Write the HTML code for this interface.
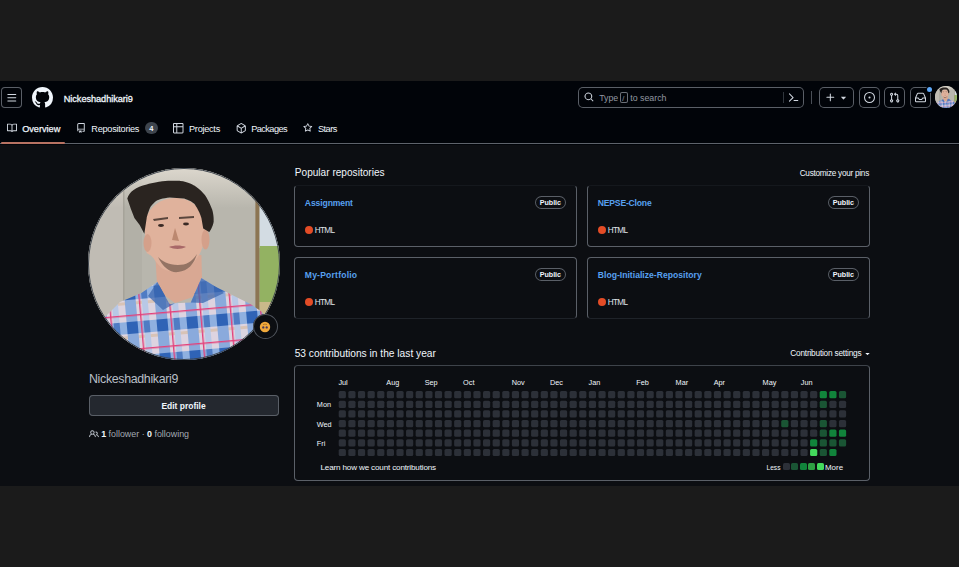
<!DOCTYPE html><html><head><meta charset="utf-8"><style>
html,body{margin:0;padding:0;}
body{width:959px;height:567px;background:#1b1b1b;position:relative;overflow:hidden;font-family:"Liberation Sans",sans-serif;}
.t{position:absolute;white-space:nowrap;line-height:1;}
.r{position:absolute;box-sizing:border-box;}
svg{position:absolute;overflow:visible;}
</style></head><body>
<div class="r" style="left:0px;top:81px;width:959px;height:64px;background:#010409;"></div>
<div class="r" style="left:0px;top:145px;width:959px;height:341px;background:#0c0e12;"></div>
<div class="r" style="left:0px;top:143px;width:959px;height:1px;background:#5e636b;"></div>
<div class="r" style="left:1px;top:142px;width:64px;height:2px;background:#b87262;border-radius:1px;"></div>
<div class="r" style="left:1px;top:87px;width:21px;height:21px;background:transparent;box-shadow:inset 0 0 0 1px #5a5f67;border-radius:4px;"></div>
<svg style="left:4px;top:90px" width="16" height="16" viewBox="0 0 16 16"><path fill="#d1d7e0" d="M1 2.75A.75.75 0 0 1 1.75 2h12.5a.75.75 0 0 1 0 1.5H1.75A.75.75 0 0 1 1 2.75Zm0 5A.75.75 0 0 1 1.75 7h12.5a.75.75 0 0 1 0 1.5H1.75A.75.75 0 0 1 1 7.75ZM1.75 12h12.5a.75.75 0 0 1 0 1.5H1.75a.75.75 0 0 1 0-1.5Z" transform="translate(2.6 2.6) scale(0.65)"/></svg>
<svg style="left:32px;top:87px" width="21" height="21" viewBox="0 0 16 16"><path fill="#f0f6fc" d="M8 0c4.42 0 8 3.58 8 8a8.013 8.013 0 0 1-5.45 7.59c-.4.08-.55-.17-.55-.38 0-.27.01-1.13.01-2.2 0-.75-.25-1.23-.54-1.48 1.78-.2 3.65-.88 3.650-3.95 0-.88-.31-1.59-.82-2.15.08-.2.36-1.02-.08-2.12 0 0-.67-.22-2.2.82-.64-.18-1.320-.27-2-.27-.68 0-1.36.09-2 .27-1.53-1.030-2.2-.82-2.2-.82-.44 1.1-.16 1.92-.08 2.12-.51.56-.82 1.28-.82 2.15 0 3.06 1.86 3.75 3.64 3.95-.23.2-.44.55-.51 1.07-.46.21-1.61.55-2.33-.66-.15-.24-.6-.83-1.23-.82-.67.01-.27.38.01.53.34.19.73.9.82 1.13.16.45.68 1.31 2.69.94 0 .67.01 1.3.01 1.49 0 .21-.15.45-.55.38A7.995 7.995 0 0 1 0 8c0-4.42 3.58-8 8-8Z"/></svg>
<div class="t" style="left:63.75px;top:95px;font-size:9.20px;color:#f0f6fc;letter-spacing:-0.057px;-webkit-text-stroke:0.3px #f0f6fc;">Nickeshadhikari9</div>
<div class="r" style="left:578px;top:87px;width:226px;height:21px;background:transparent;box-shadow:inset 0 0 0 1px #5a5f67;border-radius:5px;"></div>
<svg style="left:584px;top:92px" width="10" height="10" viewBox="0 0 16 16"><path fill="#d1d7e0" d="M10.68 11.74a6 6 0 0 1-7.922-8.982 6 6 0 0 1 8.982 7.922l3.04 3.04a.749.749 0 0 1-.326 1.275.749.749 0 0 1-.734-.215ZM11.5 7a4.499 4.499 0 1 0-8.997 0A4.499 4.499 0 0 0 11.5 7Z"/></svg>
<div class="t" style="left:599.20px;top:94px;font-size:8.80px;color:#9198a1;">Type</div>
<div class="r" style="left:620px;top:92px;width:8px;height:11px;background:transparent;box-shadow:inset 0 0 0 1px #6b7078;border-radius:2px;"></div>
<div class="t" style="left:622.30px;top:95px;font-size:7.50px;color:#9198a1;">/</div>
<div class="t" style="left:630.20px;top:94px;font-size:8.83px;color:#9198a1;">to search</div>
<div class="r" style="left:783px;top:92px;width:1px;height:11px;background:#30363d;"></div>
<svg style="left:788px;top:92px" width="11" height="11" viewBox="0 0 16 16"><path fill="#d1d7e0" d="m6.354 8.04-4.773 4.773a.75.75 0 1 0 1.061 1.06L7.945 8.57a.75.75 0 0 0 0-1.06L2.642 2.206a.75.75 0 0 0-1.06 1.061L6.353 8.04ZM8.75 11.5a.75.75 0 0 0 0 1.5h5.5a.75.75 0 0 0 0-1.5h-5.5Z"/></svg>
<div class="r" style="left:811px;top:91px;width:1px;height:13px;background:#4a4f57;"></div>
<div class="r" style="left:819px;top:87px;width:35px;height:21px;background:transparent;box-shadow:inset 0 0 0 1px #5a5f67;border-radius:5px;"></div>
<svg style="left:824.5px;top:92px" width="11" height="11" viewBox="0 0 16 16"><path fill="#d1d7e0" d="M7.75 2a.75.75 0 0 1 .75.75V7h4.25a.75.75 0 0 1 0 1.5H8.5v4.25a.75.75 0 0 1-1.5 0V8.5H2.75a.75.75 0 0 1 0-1.5H7V2.75A.75.75 0 0 1 7.75 2Z"/></svg>
<svg style="left:838px;top:92px" width="11" height="11" viewBox="0 0 16 16"><path fill="#d1d7e0" d="m4.427 7.427 3.396 3.396a.25.25 0 0 0 .354 0l3.396-3.396A.25.25 0 0 0 11.396 7H4.604a.25.25 0 0 0-.177.427Z"/></svg>
<div class="r" style="left:859px;top:87px;width:21px;height:21px;background:transparent;box-shadow:inset 0 0 0 1px #5a5f67;border-radius:5px;"></div>
<svg style="left:864px;top:92px" width="11" height="11" viewBox="0 0 16 16"><path fill="#d1d7e0" d="M8 9.5a1.5 1.5 0 1 0 0-3 1.5 1.5 0 0 0 0 3Z"/><path fill="#d1d7e0" d="M8 0a8 8 0 1 1 0 16A8 8 0 0 1 8 0ZM1.5 8a6.5 6.5 0 1 0 13 0 6.5 6.5 0 0 0-13 0Z"/></svg>
<div class="r" style="left:884px;top:87px;width:21px;height:21px;background:transparent;box-shadow:inset 0 0 0 1px #5a5f67;border-radius:5px;"></div>
<svg style="left:889px;top:92px" width="11" height="11" viewBox="0 0 16 16"><path fill="#d1d7e0" d="M1.5 3.25a2.25 2.25 0 1 1 3 2.122v5.256a2.251 2.251 0 1 1-1.5 0V5.372A2.25 2.25 0 0 1 1.5 3.25Zm5.677-.177L9.573.677A.25.25 0 0 1 10 .854V2.5h1A2.5 2.5 0 0 1 13.5 5v5.628a2.251 2.251 0 1 1-1.5 0V5a1 1 0 0 0-1-1h-1v1.646a.25.25 0 0 1-.427.177L7.177 3.427a.25.25 0 0 1 0-.354ZM3.750 2.5a.75.75 0 1 0 0 1.5.75.75 0 0 0 0-1.5Zm0 9.5a.75.75 0 1 0 0 1.5.75.75 0 0 0 0-1.5Zm8.25.75a.75.75 0 1 0 1.5 0 .75.75 0 0 0-1.5 0Z"/></svg>
<div class="r" style="left:910px;top:87px;width:21px;height:21px;background:transparent;box-shadow:inset 0 0 0 1px #5a5f67;border-radius:5px;"></div>
<svg style="left:915px;top:92px" width="11" height="11" viewBox="0 0 16 16"><path fill="#d1d7e0" d="M2.8 2.06A1.75 1.75 0 0 1 4.41 1h7.18c.7 0 1.333.417 1.61 1.06l2.74 6.395c.04.093.06.194.06.295v4.5A1.75 1.75 0 0 1 14.25 15H1.75A1.75 1.75 0 0 1 0 13.250v-4.5c0-.101.02-.202.06-.295Zm1.61.44a.25.25 0 0 0-.23.152L1.887 8H4.75a.75.75 0 0 1 .6.3L6.625 10h2.75l1.275-1.7a.75.75 0 0 1 .6-.3h2.863L11.82 2.652a.25.25 0 0 0-.23-.152Zm10.09 7h-2.875l-1.275 1.7a.75.75 0 0 1-.6.3h-3.5a.75.75 0 0 1-.6-.3L4.375 9.5H1.5v3.75c0 .138.112.25.25.25h12.5a.25.25 0 0 0 .25-.25Z"/></svg>
<div class="r" style="left:926.5px;top:86.5px;width:5.5px;height:5.5px;background:#5ea8f8;border-radius:3px;box-shadow:0 0 0 1px #010409"></div>
<svg style="left:935px;top:86px" width="22" height="22" viewBox="88 168 192 192"><g clip-path="url(#avc)">
<rect x="88" y="168" width="192" height="192" fill="#b8b6ad"/>
<rect x="88" y="168" width="36" height="192" fill="#c0bcb4"/><rect x="124" y="168" width="18" height="192" fill="#b2b0a7"/><rect x="88" y="168" width="192" height="40" fill="url(#topg)"/>
<rect x="123.3" y="168" width="1" height="192" fill="#9c998f"/>
<rect x="255.4" y="168" width="4.2" height="192" fill="#8c7553"/>
<rect x="259.6" y="168" width="25" height="80" fill="#d3dce3"/>
<rect x="259.6" y="246" width="25" height="60" fill="#93b262"/>
<rect x="259.6" y="302" width="25" height="60" fill="#c9b98a"/>
<path d="M155.5,258.5 L201.4,255 L202,278 L214,290 L175,303 L157.3,290 Z" fill="#d9a893"/>
<path d="M144.3,226 C146,210 158,198 175,198 C192,198 203,208 204.9,228.5 L203.2,244.4 C201.5,252 197,259 192.6,263.8 C187,269 183,270.8 176,271.5 C168,271.5 164,270 160.8,267.3 C157,263 155,261 153.8,258.5 C150,254 146.7,253.2 146.7,253.2 Z" fill="#e0b29c"/>
<ellipse cx="147.5" cy="243" rx="4" ry="9" fill="#d4a08a"/>
<ellipse cx="205.5" cy="239.6" rx="4" ry="10" fill="#d4a08a"/>
<path d="M158,257 C163,268 171,273 178,272 C188,271 194,264 197,254 C192,262 186,265 178,265 C168,265 162,261 158,257 Z" fill="#86685a" opacity="0.85"/>
<path d="M169,247 C174,245 181,245 186,247 C181,249.5 174,249.5 169,247 Z" fill="#a86868"/>
<ellipse cx="161" cy="225.5" rx="3" ry="1.4" fill="#3a2a25"/>
<ellipse cx="186" cy="224" rx="3" ry="1.4" fill="#3a2a25"/>
<path d="M153,219 L168,217 L168,219 L154,221 Z" fill="#5a463d"/>
<path d="M179,217 L194,216 L194,218 L179,219 Z" fill="#5a463d"/>
<path d="M175,228 L172,240 L179,241 Z" fill="#bb8870"/>
<path d="M127.3,198.5 C129,192 136,187 146.7,184.5 C152,182.5 162.6,181.2 162.6,181.2 C170,180.5 180.2,180.9 180.2,180.9 C188,181.5 194.3,185.5 194.3,185.5 C200,189 204.9,195 204.9,195 C209,201 212,209.1 212,209.1 C214,215 213.7,221.4 213.7,221.4 C213,227 209.2,232 209.2,232 L203.2,228.5 L201.4,217.9 C199,210 194.3,203.8 194.3,203.8 C190,200 183.8,198.5 183.8,198.5 L169.7,197.5 C163,198 157.3,200.3 157.3,200.3 C153,203 150.3,207.3 150.3,207.3 C148,212 146.7,217.9 146.7,217.9 L144.3,233.8 L139.7,225 L134.4,217.9 L130.9,209.1 Z" fill="#2a2420"/>
<path d="M100,362 L100,322 L106,316 L120,302 L141.4,293 L157.3,282 L169.7,304.3 L175,303.3 L190.8,302.6 L201.4,277.9 L215.5,286.7 L233.1,295.5 L250.8,304.3 L261.4,311.4 L268.4,320.2 L282,336 L282,362 Z" fill="url(#plaid)"/>
<path d="M157.3,282 L169.7,304.3 L175,303.3 L163,310 L148,296 Z" fill="#3d68b0" opacity="0.75"/>
<path d="M201.4,277.9 L215.5,286.7 L224,293 L203,303 L190.8,302.6 Z" fill="#3d68b0" opacity="0.75"/>
</g></svg>
<div class="t" style="left:22.20px;top:125px;font-size:9.20px;color:#f0f6fc;letter-spacing:-0.03px;-webkit-text-stroke:0.25px #f0f6fc;">Overview</div>
<div class="t" style="left:91.30px;top:125px;font-size:9.20px;color:#f0f6fc;letter-spacing:-0.27px;">Repositories</div>
<div class="r" style="left:145px;top:122px;width:13px;height:12px;background:#3d444d;border-radius:6px;"></div>
<div class="t" style="left:149.20px;top:125px;font-size:7.50px;font-weight:700;color:#f0f6fc;">4</div>
<div class="t" style="left:189.00px;top:125px;font-size:9.20px;color:#f0f6fc;letter-spacing:-0.279px;">Projects</div>
<div class="t" style="left:251.30px;top:125px;font-size:9.20px;color:#f0f6fc;letter-spacing:-0.588px;">Packages</div>
<div class="t" style="left:318.00px;top:125px;font-size:9.20px;color:#f0f6fc;letter-spacing:-0.555px;">Stars</div>
<svg style="left:7px;top:123px" width="10" height="10" viewBox="0 0 16 16"><path fill="#d1d7e0" d="M0 1.75A.75.75 0 0 1 .75 1h4.253c1.227 0 2.317.59 3 1.501A3.743 3.743 0 0 1 11.006 1h4.245a.75.75 0 0 1 .75.75v10.5a.75.75 0 0 1-.75.75h-4.507a2.25 2.25 0 0 0-1.591.659l-.622.621a.75.75 0 0 1-1.06 0l-.622-.621A2.25 2.25 0 0 0 5.258 13H.75a.75.75 0 0 1-.75-.75Zm7.251 10.324.004-5.073-.002-2.253A2.25 2.25 0 0 0 5.003 2.5H1.5v9h3.757a3.75 3.75 0 0 1 1.994.574ZM8.755 4.75l-.004 7.322a3.752 3.752 0 0 1 1.992-.572H14.5v-9h-3.495a2.25 2.25 0 0 0-2.25 2.25Z"/></svg>
<svg style="left:76px;top:123px" width="10" height="10" viewBox="0 0 16 16"><path fill="#d1d7e0" d="M2 2.5A2.5 2.5 0 0 1 4.5 0h8.75a.75.75 0 0 1 .75.75v12.5a.75.75 0 0 1-.75.75h-2.5a.75.75 0 0 1 0-1.5h1.75v-2h-8a1 1 0 0 0-.714 1.7.75.75 0 1 1-1.072 1.05A2.495 2.495 0 0 1 2 11.5Zm10.5-1h-8a1 1 0 0 0-1 1v6.708A2.486 2.486 0 0 1 4.5 9h8ZM5 12.25a.25.25 0 0 1 .25-.25h3.5a.25.25 0 0 1 .25.25v3.25a.25.25 0 0 1-.4.2l-1.45-1.087a.249.249 0 0 0-.3 0L5.4 15.7a.25.25 0 0 1-.4-.2Z"/></svg>
<svg style="left:173px;top:123px" width="10.5" height="10.5" viewBox="0 0 16 16"><path fill="#d1d7e0" d="M0 1.75C0 .784.784 0 1.75 0h12.5C15.216 0 16 .784 16 1.75v12.5A1.75 1.75 0 0 1 14.25 16H1.75A1.75 1.75 0 0 1 0 14.25ZM6.5 6.5v8h7.75a.25.25 0 0 0 .25-.25V6.5Zm8-1.5V1.75a.25.25 0 0 0-.25-.25H6.5V5Zm-13 1.5v7.750c0 .138.112.25.25.25H5v-8ZM5 5V1.5H1.75a.25.25 0 0 0-.25.25V5Z"/></svg>
<svg style="left:235.5px;top:123px" width="10.5" height="10.5" viewBox="0 0 16 16"><path fill="#d1d7e0" d="m8.878.392 5.25 3.045c.54.314.872.89.872 1.514v6.098a1.75 1.75 0 0 1-.872 1.514l-5.25 3.045a1.75 1.75 0 0 1-1.756 0l-5.25-3.045A1.75 1.75 0 0 1 1 11.049V4.951c0-.624.332-1.2.872-1.514L7.122.392a1.75 1.75 0 0 1 1.756 0ZM7.875 1.69l-4.63 2.685L8 7.133l4.755-2.758-4.63-2.685a.248.248 0 0 0-.25 0ZM2.5 5.677v5.372c0 .09.047.171.125.216l4.625 2.683V8.432Zm6.25 8.271 4.625-2.683a.25.25 0 0 0 .125-.216V5.677L8.75 8.432Z"/></svg>
<svg style="left:302.8px;top:123px" width="9.6" height="9.6" viewBox="0 0 16 16"><path fill="#d1d7e0" d="M8 .25a.75.75 0 0 1 .673.418l1.882 3.815 4.21.612a.75.75 0 0 1 .416 1.279l-3.046 2.97.719 4.192a.751.751 0 0 1-1.088.791L8 12.347l-3.766 1.98a.75.75 0 0 1-1.088-.79l.72-4.194L.818 6.374a.75.75 0 0 1 .416-1.28l4.21-.611L7.327.668A.75.75 0 0 1 8 .25Zm0 2.445L6.615 5.5a.75.75 0 0 1-.564.41l-3.097.45 2.24 2.184a.75.75 0 0 1 .216.664l-.528 3.084 2.769-1.456a.75.75 0 0 1 .698 0l2.77 1.456-.53-3.084a.75.75 0 0 1 .216-.664l2.24-2.183-3.096-.45a.75.75 0 0 1-.564-.41L8 2.694Z"/></svg>
<svg style="left:0;top:0" width="0" height="0"><defs>
<linearGradient id="topg" x1="0" y1="0" x2="0" y2="1"><stop offset="0" stop-color="#dcd7cd"/><stop offset="1" stop-color="#dcd7cd" stop-opacity="0"/></linearGradient><clipPath id="avc"><circle cx="184" cy="264" r="96"/></clipPath>
<pattern id="plaid" patternUnits="userSpaceOnUse" x="98" y="288" width="30" height="34" patternTransform="rotate(-5)">
<rect width="30" height="34" fill="#ddd4e0"/>
<rect x="0" y="24" width="30" height="3" fill="#d8c3b6"/>
<rect x="17" y="0" width="6" height="34" fill="#b8c8e6"/>
<rect x="0" y="10" width="30" height="12" fill="#8fb0e0"/>
<rect x="0" y="0" width="11" height="34" fill="#8aaadc"/>
<rect x="0" y="10" width="11" height="12" fill="#2f63b6"/>
<rect x="17" y="10" width="6" height="12" fill="#4f7cc4"/>
<rect x="14" y="0" width="1.4" height="34" fill="#e4407a"/>
<rect x="0" y="3" width="30" height="1.4" fill="#e4407a"/>
</pattern>
</defs></svg><svg style="left:88px;top:168px" width="192" height="192" viewBox="88 168 192 192"><g clip-path="url(#avc)">
<rect x="88" y="168" width="192" height="192" fill="#b8b6ad"/>
<rect x="88" y="168" width="36" height="192" fill="#c0bcb4"/><rect x="124" y="168" width="18" height="192" fill="#b2b0a7"/><rect x="88" y="168" width="192" height="40" fill="url(#topg)"/>
<rect x="123.3" y="168" width="1" height="192" fill="#9c998f"/>
<rect x="255.4" y="168" width="4.2" height="192" fill="#8c7553"/>
<rect x="259.6" y="168" width="25" height="80" fill="#d3dce3"/>
<rect x="259.6" y="246" width="25" height="60" fill="#93b262"/>
<rect x="259.6" y="302" width="25" height="60" fill="#c9b98a"/>
<path d="M155.5,258.5 L201.4,255 L202,278 L214,290 L175,303 L157.3,290 Z" fill="#d9a893"/>
<path d="M144.3,226 C146,210 158,198 175,198 C192,198 203,208 204.9,228.5 L203.2,244.4 C201.5,252 197,259 192.6,263.8 C187,269 183,270.8 176,271.5 C168,271.5 164,270 160.8,267.3 C157,263 155,261 153.8,258.5 C150,254 146.7,253.2 146.7,253.2 Z" fill="#e0b29c"/>
<ellipse cx="147.5" cy="243" rx="4" ry="9" fill="#d4a08a"/>
<ellipse cx="205.5" cy="239.6" rx="4" ry="10" fill="#d4a08a"/>
<path d="M158,257 C163,268 171,273 178,272 C188,271 194,264 197,254 C192,262 186,265 178,265 C168,265 162,261 158,257 Z" fill="#86685a" opacity="0.85"/>
<path d="M169,247 C174,245 181,245 186,247 C181,249.5 174,249.5 169,247 Z" fill="#a86868"/>
<ellipse cx="161" cy="225.5" rx="3" ry="1.4" fill="#3a2a25"/>
<ellipse cx="186" cy="224" rx="3" ry="1.4" fill="#3a2a25"/>
<path d="M153,219 L168,217 L168,219 L154,221 Z" fill="#5a463d"/>
<path d="M179,217 L194,216 L194,218 L179,219 Z" fill="#5a463d"/>
<path d="M175,228 L172,240 L179,241 Z" fill="#bb8870"/>
<path d="M127.3,198.5 C129,192 136,187 146.7,184.5 C152,182.5 162.6,181.2 162.6,181.2 C170,180.5 180.2,180.9 180.2,180.9 C188,181.5 194.3,185.5 194.3,185.5 C200,189 204.9,195 204.9,195 C209,201 212,209.1 212,209.1 C214,215 213.7,221.4 213.7,221.4 C213,227 209.2,232 209.2,232 L203.2,228.5 L201.4,217.9 C199,210 194.3,203.8 194.3,203.8 C190,200 183.8,198.5 183.8,198.5 L169.7,197.5 C163,198 157.3,200.3 157.3,200.3 C153,203 150.3,207.3 150.3,207.3 C148,212 146.7,217.9 146.7,217.9 L144.3,233.8 L139.7,225 L134.4,217.9 L130.9,209.1 Z" fill="#2a2420"/>
<path d="M100,362 L100,322 L106,316 L120,302 L141.4,293 L157.3,282 L169.7,304.3 L175,303.3 L190.8,302.6 L201.4,277.9 L215.5,286.7 L233.1,295.5 L250.8,304.3 L261.4,311.4 L268.4,320.2 L282,336 L282,362 Z" fill="url(#plaid)"/>
<path d="M157.3,282 L169.7,304.3 L175,303.3 L163,310 L148,296 Z" fill="#3d68b0" opacity="0.75"/>
<path d="M201.4,277.9 L215.5,286.7 L224,293 L203,303 L190.8,302.6 Z" fill="#3d68b0" opacity="0.75"/>
</g><circle cx="184" cy="264" r="95.5" fill="none" stroke="#3d444d" stroke-width="1"/></svg>
<div class="r" style="left:253px;top:314px;width:25px;height:25px;background:#0c0e12;box-shadow:inset 0 0 0 1px #4f545c;border-radius:13px;"></div>
<svg style="left:259px;top:321px" width="12" height="12" viewBox="0 0 12 12"><circle cx="6" cy="6" r="5.2" fill="#f2a93b"/><ellipse cx="4.3" cy="6.4" rx="1.1" ry="1.2" fill="#4a3a5a"/><ellipse cx="7.7" cy="6.4" rx="1.1" ry="1.2" fill="#4a3a5a"/><path d="M4,3.6 Q6,2.6 8,3.6" stroke="#8a5a20" stroke-width="0.6" fill="none"/></svg>
<div class="t" style="left:89.00px;top:373px;font-size:12.40px;color:#b9bfc7;letter-spacing:-0.333px;">Nickeshadhikari9</div>
<div class="r" style="left:89px;top:395px;width:190px;height:21px;background:#24282f;box-shadow:inset 0 0 0 1px #5a5f67;border-radius:4px;"></div>
<div class="t" style="left:161.40px;top:402px;font-size:8.48px;font-weight:700;color:#f0f6fc;">Edit profile</div>
<svg style="left:88.8px;top:428.5px" width="10" height="10" viewBox="0 0 16 16"><path fill="#c0c6ce" d="M2 5.5a3.5 3.5 0 1 1 5.898 2.549 5.508 5.508 0 0 1 3.034 4.084.75.75 0 1 1-1.482.235 4 4 0 0 0-7.9 0 .75.75 0 0 1-1.482-.236A5.507 5.507 0 0 1 3.102 8.05 3.493 3.493 0 0 1 2 5.5ZM11 4a3.001 3.001 0 0 1 2.22 5.018 5.01 5.01 0 0 1 2.56 3.012.749.749 0 0 1-.885.954.752.752 0 0 1-.549-.514 3.507 3.507 0 0 0-2.522-2.372.75.75 0 0 1-.574-.73v-.352a.75.75 0 0 1 .416-.672A1.5 1.5 0 0 0 11 5.5.75.75 0 0 1 11 4Zm-5.5-.5a2 2 0 1 0-.001 3.999A2 2 0 0 0 5.5 3.5Z"/></svg>
<div class="t" style="left:101.2px;top:430px;font-size:8.9px;color:#a4abb4"><b style="color:#f0f6fc">1</b> follower · <b style="color:#f0f6fc">0</b> following</div>
<div class="t" style="left:294.80px;top:168px;font-size:10.10px;color:#f0f6fc;">Popular repositories</div>
<div class="t" style="left:799.70px;top:170px;font-size:8.20px;color:#f0f6fc;letter-spacing:-0.257px;">Customize your pins</div>
<div class="r" style="left:294px;top:185px;width:283px;height:62px;border:1px solid #5b6068;border-top-color:#15181d;border-bottom-color:#5b6068;border-radius:4px"></div>
<div class="t" style="left:304.80px;top:199px;font-size:8.60px;font-weight:700;color:#58a0f0;letter-spacing:-0.112px;">Assignment</div>
<div class="r" style="left:535px;top:196px;width:31px;height:13px;background:transparent;box-shadow:inset 0 0 0 1px #5a5f67;border-radius:7px;"></div>
<div class="t" style="left:539.70px;top:200px;font-size:7.13px;font-weight:700;color:#f0f6fc;">Public</div>
<div class="r" style="left:305px;top:226px;width:8px;height:8px;background:#e34c26;border-radius:4px;"></div>
<div class="t" style="left:314.70px;top:227px;font-size:8.20px;color:#e0e4ea;letter-spacing:-0.68px;">HTML</div>
<div class="r" style="left:587px;top:185px;width:283px;height:62px;border:1px solid #5b6068;border-top-color:#15181d;border-bottom-color:#5b6068;border-radius:4px"></div>
<div class="t" style="left:597.80px;top:199px;font-size:8.60px;font-weight:700;color:#58a0f0;letter-spacing:-0.201px;">NEPSE-Clone</div>
<div class="r" style="left:828px;top:196px;width:31px;height:13px;background:transparent;box-shadow:inset 0 0 0 1px #5a5f67;border-radius:7px;"></div>
<div class="t" style="left:832.70px;top:200px;font-size:7.13px;font-weight:700;color:#f0f6fc;">Public</div>
<div class="r" style="left:598px;top:226px;width:8px;height:8px;background:#e34c26;border-radius:4px;"></div>
<div class="t" style="left:607.70px;top:227px;font-size:8.20px;color:#e0e4ea;letter-spacing:-0.68px;">HTML</div>
<div class="r" style="left:294px;top:257px;width:283px;height:62px;border:1px solid #5b6068;border-top-color:#5b6068;border-bottom-color:#1f2329;border-radius:4px"></div>
<div class="t" style="left:304.80px;top:271px;font-size:8.60px;font-weight:700;color:#58a0f0;letter-spacing:0.195px;">My-Portfolio</div>
<div class="r" style="left:535px;top:268px;width:31px;height:13px;background:transparent;box-shadow:inset 0 0 0 1px #5a5f67;border-radius:7px;"></div>
<div class="t" style="left:539.70px;top:272px;font-size:7.13px;font-weight:700;color:#f0f6fc;">Public</div>
<div class="r" style="left:305px;top:298px;width:8px;height:8px;background:#e34c26;border-radius:4px;"></div>
<div class="t" style="left:314.70px;top:299px;font-size:8.20px;color:#e0e4ea;letter-spacing:-0.68px;">HTML</div>
<div class="r" style="left:587px;top:257px;width:283px;height:62px;border:1px solid #5b6068;border-top-color:#5b6068;border-bottom-color:#1f2329;border-radius:4px"></div>
<div class="t" style="left:597.80px;top:271px;font-size:8.60px;font-weight:700;color:#58a0f0;letter-spacing:0.012px;">Blog-Initialize-Repository</div>
<div class="r" style="left:828px;top:268px;width:31px;height:13px;background:transparent;box-shadow:inset 0 0 0 1px #5a5f67;border-radius:7px;"></div>
<div class="t" style="left:832.70px;top:272px;font-size:7.13px;font-weight:700;color:#f0f6fc;">Public</div>
<div class="r" style="left:598px;top:298px;width:8px;height:8px;background:#e34c26;border-radius:4px;"></div>
<div class="t" style="left:607.70px;top:299px;font-size:8.20px;color:#e0e4ea;letter-spacing:-0.68px;">HTML</div>
<div class="t" style="left:294.70px;top:349px;font-size:10.21px;color:#f0f6fc;">53 contributions in the last year</div>
<div class="t" style="left:790.20px;top:349px;font-size:8.30px;color:#f0f6fc;letter-spacing:-0.208px;">Contribution settings</div>
<svg style="left:863px;top:349px" width="9" height="9" viewBox="0 0 16 16"><path fill="#f0f6fc" d="m4.427 7.427 3.396 3.396a.25.25 0 0 0 .354 0l3.396-3.396A.25.25 0 0 0 11.396 7H4.604a.25.25 0 0 0-.177.427Z"/></svg>
<div class="r" style="left:294px;top:365px;width:576px;height:116px;border:1px solid #5b6068;border-top-color:#3e434a;border-radius:4px"></div>
<div class="t" style="left:338.40px;top:379px;font-size:7.30px;color:#f0f6fc;">Jul</div>
<div class="t" style="left:386.30px;top:379px;font-size:7.30px;color:#f0f6fc;">Aug</div>
<div class="t" style="left:424.70px;top:379px;font-size:7.30px;color:#f0f6fc;">Sep</div>
<div class="t" style="left:463.10px;top:379px;font-size:7.30px;color:#f0f6fc;">Oct</div>
<div class="t" style="left:511.80px;top:379px;font-size:7.30px;color:#f0f6fc;">Nov</div>
<div class="t" style="left:550.00px;top:379px;font-size:7.30px;color:#f0f6fc;">Dec</div>
<div class="t" style="left:588.50px;top:379px;font-size:7.30px;color:#f0f6fc;">Jan</div>
<div class="t" style="left:636.30px;top:379px;font-size:7.30px;color:#f0f6fc;">Feb</div>
<div class="t" style="left:675.60px;top:379px;font-size:7.30px;color:#f0f6fc;">Mar</div>
<div class="t" style="left:713.70px;top:379px;font-size:7.30px;color:#f0f6fc;">Apr</div>
<div class="t" style="left:762.60px;top:379px;font-size:7.30px;color:#f0f6fc;">May</div>
<div class="t" style="left:800.80px;top:379px;font-size:7.30px;color:#f0f6fc;">Jun</div>
<div class="t" style="left:316.80px;top:401px;font-size:7.30px;color:#f0f6fc;">Mon</div>
<div class="t" style="left:316.80px;top:421px;font-size:7.30px;color:#f0f6fc;">Wed</div>
<div class="t" style="left:316.80px;top:440px;font-size:7.30px;color:#f0f6fc;">Fri</div>
<svg style="left:338px;top:390px" width="520" height="70"><rect x="0.70" y="1.10" width="7.2" height="7.2" rx="1.5" fill="#2c3038"/><rect x="0.70" y="10.73" width="7.2" height="7.2" rx="1.5" fill="#2c3038"/><rect x="0.70" y="20.36" width="7.2" height="7.2" rx="1.5" fill="#2c3038"/><rect x="0.70" y="29.99" width="7.2" height="7.2" rx="1.5" fill="#2c3038"/><rect x="0.70" y="39.62" width="7.2" height="7.2" rx="1.5" fill="#2c3038"/><rect x="0.70" y="49.25" width="7.2" height="7.2" rx="1.5" fill="#2c3038"/><rect x="0.70" y="58.88" width="7.2" height="7.2" rx="1.5" fill="#2c3038"/><rect x="10.32" y="1.10" width="7.2" height="7.2" rx="1.5" fill="#2c3038"/><rect x="10.32" y="10.73" width="7.2" height="7.2" rx="1.5" fill="#2c3038"/><rect x="10.32" y="20.36" width="7.2" height="7.2" rx="1.5" fill="#2c3038"/><rect x="10.32" y="29.99" width="7.2" height="7.2" rx="1.5" fill="#2c3038"/><rect x="10.32" y="39.62" width="7.2" height="7.2" rx="1.5" fill="#2c3038"/><rect x="10.32" y="49.25" width="7.2" height="7.2" rx="1.5" fill="#2c3038"/><rect x="10.32" y="58.88" width="7.2" height="7.2" rx="1.5" fill="#2c3038"/><rect x="19.94" y="1.10" width="7.2" height="7.2" rx="1.5" fill="#2c3038"/><rect x="19.94" y="10.73" width="7.2" height="7.2" rx="1.5" fill="#2c3038"/><rect x="19.94" y="20.36" width="7.2" height="7.2" rx="1.5" fill="#2c3038"/><rect x="19.94" y="29.99" width="7.2" height="7.2" rx="1.5" fill="#2c3038"/><rect x="19.94" y="39.62" width="7.2" height="7.2" rx="1.5" fill="#2c3038"/><rect x="19.94" y="49.25" width="7.2" height="7.2" rx="1.5" fill="#2c3038"/><rect x="19.94" y="58.88" width="7.2" height="7.2" rx="1.5" fill="#2c3038"/><rect x="29.56" y="1.10" width="7.2" height="7.2" rx="1.5" fill="#2c3038"/><rect x="29.56" y="10.73" width="7.2" height="7.2" rx="1.5" fill="#2c3038"/><rect x="29.56" y="20.36" width="7.2" height="7.2" rx="1.5" fill="#2c3038"/><rect x="29.56" y="29.99" width="7.2" height="7.2" rx="1.5" fill="#2c3038"/><rect x="29.56" y="39.62" width="7.2" height="7.2" rx="1.5" fill="#2c3038"/><rect x="29.56" y="49.25" width="7.2" height="7.2" rx="1.5" fill="#2c3038"/><rect x="29.56" y="58.88" width="7.2" height="7.2" rx="1.5" fill="#2c3038"/><rect x="39.18" y="1.10" width="7.2" height="7.2" rx="1.5" fill="#2c3038"/><rect x="39.18" y="10.73" width="7.2" height="7.2" rx="1.5" fill="#2c3038"/><rect x="39.18" y="20.36" width="7.2" height="7.2" rx="1.5" fill="#2c3038"/><rect x="39.18" y="29.99" width="7.2" height="7.2" rx="1.5" fill="#2c3038"/><rect x="39.18" y="39.62" width="7.2" height="7.2" rx="1.5" fill="#2c3038"/><rect x="39.18" y="49.25" width="7.2" height="7.2" rx="1.5" fill="#2c3038"/><rect x="39.18" y="58.88" width="7.2" height="7.2" rx="1.5" fill="#2c3038"/><rect x="48.80" y="1.10" width="7.2" height="7.2" rx="1.5" fill="#2c3038"/><rect x="48.80" y="10.73" width="7.2" height="7.2" rx="1.5" fill="#2c3038"/><rect x="48.80" y="20.36" width="7.2" height="7.2" rx="1.5" fill="#2c3038"/><rect x="48.80" y="29.99" width="7.2" height="7.2" rx="1.5" fill="#2c3038"/><rect x="48.80" y="39.62" width="7.2" height="7.2" rx="1.5" fill="#2c3038"/><rect x="48.80" y="49.25" width="7.2" height="7.2" rx="1.5" fill="#2c3038"/><rect x="48.80" y="58.88" width="7.2" height="7.2" rx="1.5" fill="#2c3038"/><rect x="58.42" y="1.10" width="7.2" height="7.2" rx="1.5" fill="#2c3038"/><rect x="58.42" y="10.73" width="7.2" height="7.2" rx="1.5" fill="#2c3038"/><rect x="58.42" y="20.36" width="7.2" height="7.2" rx="1.5" fill="#2c3038"/><rect x="58.42" y="29.99" width="7.2" height="7.2" rx="1.5" fill="#2c3038"/><rect x="58.42" y="39.62" width="7.2" height="7.2" rx="1.5" fill="#2c3038"/><rect x="58.42" y="49.25" width="7.2" height="7.2" rx="1.5" fill="#2c3038"/><rect x="58.42" y="58.88" width="7.2" height="7.2" rx="1.5" fill="#2c3038"/><rect x="68.04" y="1.10" width="7.2" height="7.2" rx="1.5" fill="#2c3038"/><rect x="68.04" y="10.73" width="7.2" height="7.2" rx="1.5" fill="#2c3038"/><rect x="68.04" y="20.36" width="7.2" height="7.2" rx="1.5" fill="#2c3038"/><rect x="68.04" y="29.99" width="7.2" height="7.2" rx="1.5" fill="#2c3038"/><rect x="68.04" y="39.62" width="7.2" height="7.2" rx="1.5" fill="#2c3038"/><rect x="68.04" y="49.25" width="7.2" height="7.2" rx="1.5" fill="#2c3038"/><rect x="68.04" y="58.88" width="7.2" height="7.2" rx="1.5" fill="#2c3038"/><rect x="77.66" y="1.10" width="7.2" height="7.2" rx="1.5" fill="#2c3038"/><rect x="77.66" y="10.73" width="7.2" height="7.2" rx="1.5" fill="#2c3038"/><rect x="77.66" y="20.36" width="7.2" height="7.2" rx="1.5" fill="#2c3038"/><rect x="77.66" y="29.99" width="7.2" height="7.2" rx="1.5" fill="#2c3038"/><rect x="77.66" y="39.62" width="7.2" height="7.2" rx="1.5" fill="#2c3038"/><rect x="77.66" y="49.25" width="7.2" height="7.2" rx="1.5" fill="#2c3038"/><rect x="77.66" y="58.88" width="7.2" height="7.2" rx="1.5" fill="#2c3038"/><rect x="87.28" y="1.10" width="7.2" height="7.2" rx="1.5" fill="#2c3038"/><rect x="87.28" y="10.73" width="7.2" height="7.2" rx="1.5" fill="#2c3038"/><rect x="87.28" y="20.36" width="7.2" height="7.2" rx="1.5" fill="#2c3038"/><rect x="87.28" y="29.99" width="7.2" height="7.2" rx="1.5" fill="#2c3038"/><rect x="87.28" y="39.62" width="7.2" height="7.2" rx="1.5" fill="#2c3038"/><rect x="87.28" y="49.25" width="7.2" height="7.2" rx="1.5" fill="#2c3038"/><rect x="87.28" y="58.88" width="7.2" height="7.2" rx="1.5" fill="#2c3038"/><rect x="96.90" y="1.10" width="7.2" height="7.2" rx="1.5" fill="#2c3038"/><rect x="96.90" y="10.73" width="7.2" height="7.2" rx="1.5" fill="#2c3038"/><rect x="96.90" y="20.36" width="7.2" height="7.2" rx="1.5" fill="#2c3038"/><rect x="96.90" y="29.99" width="7.2" height="7.2" rx="1.5" fill="#2c3038"/><rect x="96.90" y="39.62" width="7.2" height="7.2" rx="1.5" fill="#2c3038"/><rect x="96.90" y="49.25" width="7.2" height="7.2" rx="1.5" fill="#2c3038"/><rect x="96.90" y="58.88" width="7.2" height="7.2" rx="1.5" fill="#2c3038"/><rect x="106.52" y="1.10" width="7.2" height="7.2" rx="1.5" fill="#2c3038"/><rect x="106.52" y="10.73" width="7.2" height="7.2" rx="1.5" fill="#2c3038"/><rect x="106.52" y="20.36" width="7.2" height="7.2" rx="1.5" fill="#2c3038"/><rect x="106.52" y="29.99" width="7.2" height="7.2" rx="1.5" fill="#2c3038"/><rect x="106.52" y="39.62" width="7.2" height="7.2" rx="1.5" fill="#2c3038"/><rect x="106.52" y="49.25" width="7.2" height="7.2" rx="1.5" fill="#2c3038"/><rect x="106.52" y="58.88" width="7.2" height="7.2" rx="1.5" fill="#2c3038"/><rect x="116.14" y="1.10" width="7.2" height="7.2" rx="1.5" fill="#2c3038"/><rect x="116.14" y="10.73" width="7.2" height="7.2" rx="1.5" fill="#2c3038"/><rect x="116.14" y="20.36" width="7.2" height="7.2" rx="1.5" fill="#2c3038"/><rect x="116.14" y="29.99" width="7.2" height="7.2" rx="1.5" fill="#2c3038"/><rect x="116.14" y="39.62" width="7.2" height="7.2" rx="1.5" fill="#2c3038"/><rect x="116.14" y="49.25" width="7.2" height="7.2" rx="1.5" fill="#2c3038"/><rect x="116.14" y="58.88" width="7.2" height="7.2" rx="1.5" fill="#2c3038"/><rect x="125.76" y="1.10" width="7.2" height="7.2" rx="1.5" fill="#2c3038"/><rect x="125.76" y="10.73" width="7.2" height="7.2" rx="1.5" fill="#2c3038"/><rect x="125.76" y="20.36" width="7.2" height="7.2" rx="1.5" fill="#2c3038"/><rect x="125.76" y="29.99" width="7.2" height="7.2" rx="1.5" fill="#2c3038"/><rect x="125.76" y="39.62" width="7.2" height="7.2" rx="1.5" fill="#2c3038"/><rect x="125.76" y="49.25" width="7.2" height="7.2" rx="1.5" fill="#2c3038"/><rect x="125.76" y="58.88" width="7.2" height="7.2" rx="1.5" fill="#2c3038"/><rect x="135.38" y="1.10" width="7.2" height="7.2" rx="1.5" fill="#2c3038"/><rect x="135.38" y="10.73" width="7.2" height="7.2" rx="1.5" fill="#2c3038"/><rect x="135.38" y="20.36" width="7.2" height="7.2" rx="1.5" fill="#2c3038"/><rect x="135.38" y="29.99" width="7.2" height="7.2" rx="1.5" fill="#2c3038"/><rect x="135.38" y="39.62" width="7.2" height="7.2" rx="1.5" fill="#2c3038"/><rect x="135.38" y="49.25" width="7.2" height="7.2" rx="1.5" fill="#2c3038"/><rect x="135.38" y="58.88" width="7.2" height="7.2" rx="1.5" fill="#2c3038"/><rect x="145.00" y="1.10" width="7.2" height="7.2" rx="1.5" fill="#2c3038"/><rect x="145.00" y="10.73" width="7.2" height="7.2" rx="1.5" fill="#2c3038"/><rect x="145.00" y="20.36" width="7.2" height="7.2" rx="1.5" fill="#2c3038"/><rect x="145.00" y="29.99" width="7.2" height="7.2" rx="1.5" fill="#2c3038"/><rect x="145.00" y="39.62" width="7.2" height="7.2" rx="1.5" fill="#2c3038"/><rect x="145.00" y="49.25" width="7.2" height="7.2" rx="1.5" fill="#2c3038"/><rect x="145.00" y="58.88" width="7.2" height="7.2" rx="1.5" fill="#2c3038"/><rect x="154.62" y="1.10" width="7.2" height="7.2" rx="1.5" fill="#2c3038"/><rect x="154.62" y="10.73" width="7.2" height="7.2" rx="1.5" fill="#2c3038"/><rect x="154.62" y="20.36" width="7.2" height="7.2" rx="1.5" fill="#2c3038"/><rect x="154.62" y="29.99" width="7.2" height="7.2" rx="1.5" fill="#2c3038"/><rect x="154.62" y="39.62" width="7.2" height="7.2" rx="1.5" fill="#2c3038"/><rect x="154.62" y="49.25" width="7.2" height="7.2" rx="1.5" fill="#2c3038"/><rect x="154.62" y="58.88" width="7.2" height="7.2" rx="1.5" fill="#2c3038"/><rect x="164.24" y="1.10" width="7.2" height="7.2" rx="1.5" fill="#2c3038"/><rect x="164.24" y="10.73" width="7.2" height="7.2" rx="1.5" fill="#2c3038"/><rect x="164.24" y="20.36" width="7.2" height="7.2" rx="1.5" fill="#2c3038"/><rect x="164.24" y="29.99" width="7.2" height="7.2" rx="1.5" fill="#2c3038"/><rect x="164.24" y="39.62" width="7.2" height="7.2" rx="1.5" fill="#2c3038"/><rect x="164.24" y="49.25" width="7.2" height="7.2" rx="1.5" fill="#2c3038"/><rect x="164.24" y="58.88" width="7.2" height="7.2" rx="1.5" fill="#2c3038"/><rect x="173.86" y="1.10" width="7.2" height="7.2" rx="1.5" fill="#2c3038"/><rect x="173.86" y="10.73" width="7.2" height="7.2" rx="1.5" fill="#2c3038"/><rect x="173.86" y="20.36" width="7.2" height="7.2" rx="1.5" fill="#2c3038"/><rect x="173.86" y="29.99" width="7.2" height="7.2" rx="1.5" fill="#2c3038"/><rect x="173.86" y="39.62" width="7.2" height="7.2" rx="1.5" fill="#2c3038"/><rect x="173.86" y="49.25" width="7.2" height="7.2" rx="1.5" fill="#2c3038"/><rect x="173.86" y="58.88" width="7.2" height="7.2" rx="1.5" fill="#2c3038"/><rect x="183.48" y="1.10" width="7.2" height="7.2" rx="1.5" fill="#2c3038"/><rect x="183.48" y="10.73" width="7.2" height="7.2" rx="1.5" fill="#2c3038"/><rect x="183.48" y="20.36" width="7.2" height="7.2" rx="1.5" fill="#2c3038"/><rect x="183.48" y="29.99" width="7.2" height="7.2" rx="1.5" fill="#2c3038"/><rect x="183.48" y="39.62" width="7.2" height="7.2" rx="1.5" fill="#2c3038"/><rect x="183.48" y="49.25" width="7.2" height="7.2" rx="1.5" fill="#2c3038"/><rect x="183.48" y="58.88" width="7.2" height="7.2" rx="1.5" fill="#2c3038"/><rect x="193.10" y="1.10" width="7.2" height="7.2" rx="1.5" fill="#2c3038"/><rect x="193.10" y="10.73" width="7.2" height="7.2" rx="1.5" fill="#2c3038"/><rect x="193.10" y="20.36" width="7.2" height="7.2" rx="1.5" fill="#2c3038"/><rect x="193.10" y="29.99" width="7.2" height="7.2" rx="1.5" fill="#2c3038"/><rect x="193.10" y="39.62" width="7.2" height="7.2" rx="1.5" fill="#2c3038"/><rect x="193.10" y="49.25" width="7.2" height="7.2" rx="1.5" fill="#2c3038"/><rect x="193.10" y="58.88" width="7.2" height="7.2" rx="1.5" fill="#2c3038"/><rect x="202.72" y="1.10" width="7.2" height="7.2" rx="1.5" fill="#2c3038"/><rect x="202.72" y="10.73" width="7.2" height="7.2" rx="1.5" fill="#2c3038"/><rect x="202.72" y="20.36" width="7.2" height="7.2" rx="1.5" fill="#2c3038"/><rect x="202.72" y="29.99" width="7.2" height="7.2" rx="1.5" fill="#2c3038"/><rect x="202.72" y="39.62" width="7.2" height="7.2" rx="1.5" fill="#2c3038"/><rect x="202.72" y="49.25" width="7.2" height="7.2" rx="1.5" fill="#2c3038"/><rect x="202.72" y="58.88" width="7.2" height="7.2" rx="1.5" fill="#2c3038"/><rect x="212.34" y="1.10" width="7.2" height="7.2" rx="1.5" fill="#2c3038"/><rect x="212.34" y="10.73" width="7.2" height="7.2" rx="1.5" fill="#2c3038"/><rect x="212.34" y="20.36" width="7.2" height="7.2" rx="1.5" fill="#2c3038"/><rect x="212.34" y="29.99" width="7.2" height="7.2" rx="1.5" fill="#2c3038"/><rect x="212.34" y="39.62" width="7.2" height="7.2" rx="1.5" fill="#2c3038"/><rect x="212.34" y="49.25" width="7.2" height="7.2" rx="1.5" fill="#2c3038"/><rect x="212.34" y="58.88" width="7.2" height="7.2" rx="1.5" fill="#2c3038"/><rect x="221.96" y="1.10" width="7.2" height="7.2" rx="1.5" fill="#2c3038"/><rect x="221.96" y="10.73" width="7.2" height="7.2" rx="1.5" fill="#2c3038"/><rect x="221.96" y="20.36" width="7.2" height="7.2" rx="1.5" fill="#2c3038"/><rect x="221.96" y="29.99" width="7.2" height="7.2" rx="1.5" fill="#2c3038"/><rect x="221.96" y="39.62" width="7.2" height="7.2" rx="1.5" fill="#2c3038"/><rect x="221.96" y="49.25" width="7.2" height="7.2" rx="1.5" fill="#2c3038"/><rect x="221.96" y="58.88" width="7.2" height="7.2" rx="1.5" fill="#2c3038"/><rect x="231.58" y="1.10" width="7.2" height="7.2" rx="1.5" fill="#2c3038"/><rect x="231.58" y="10.73" width="7.2" height="7.2" rx="1.5" fill="#2c3038"/><rect x="231.58" y="20.36" width="7.2" height="7.2" rx="1.5" fill="#2c3038"/><rect x="231.58" y="29.99" width="7.2" height="7.2" rx="1.5" fill="#2c3038"/><rect x="231.58" y="39.62" width="7.2" height="7.2" rx="1.5" fill="#2c3038"/><rect x="231.58" y="49.25" width="7.2" height="7.2" rx="1.5" fill="#2c3038"/><rect x="231.58" y="58.88" width="7.2" height="7.2" rx="1.5" fill="#2c3038"/><rect x="241.20" y="1.10" width="7.2" height="7.2" rx="1.5" fill="#2c3038"/><rect x="241.20" y="10.73" width="7.2" height="7.2" rx="1.5" fill="#2c3038"/><rect x="241.20" y="20.36" width="7.2" height="7.2" rx="1.5" fill="#2c3038"/><rect x="241.20" y="29.99" width="7.2" height="7.2" rx="1.5" fill="#2c3038"/><rect x="241.20" y="39.62" width="7.2" height="7.2" rx="1.5" fill="#2c3038"/><rect x="241.20" y="49.25" width="7.2" height="7.2" rx="1.5" fill="#2c3038"/><rect x="241.20" y="58.88" width="7.2" height="7.2" rx="1.5" fill="#2c3038"/><rect x="250.82" y="1.10" width="7.2" height="7.2" rx="1.5" fill="#2c3038"/><rect x="250.82" y="10.73" width="7.2" height="7.2" rx="1.5" fill="#2c3038"/><rect x="250.82" y="20.36" width="7.2" height="7.2" rx="1.5" fill="#2c3038"/><rect x="250.82" y="29.99" width="7.2" height="7.2" rx="1.5" fill="#2c3038"/><rect x="250.82" y="39.62" width="7.2" height="7.2" rx="1.5" fill="#2c3038"/><rect x="250.82" y="49.25" width="7.2" height="7.2" rx="1.5" fill="#2c3038"/><rect x="250.82" y="58.88" width="7.2" height="7.2" rx="1.5" fill="#2c3038"/><rect x="260.44" y="1.10" width="7.2" height="7.2" rx="1.5" fill="#2c3038"/><rect x="260.44" y="10.73" width="7.2" height="7.2" rx="1.5" fill="#2c3038"/><rect x="260.44" y="20.36" width="7.2" height="7.2" rx="1.5" fill="#2c3038"/><rect x="260.44" y="29.99" width="7.2" height="7.2" rx="1.5" fill="#2c3038"/><rect x="260.44" y="39.62" width="7.2" height="7.2" rx="1.5" fill="#2c3038"/><rect x="260.44" y="49.25" width="7.2" height="7.2" rx="1.5" fill="#2c3038"/><rect x="260.44" y="58.88" width="7.2" height="7.2" rx="1.5" fill="#2c3038"/><rect x="270.06" y="1.10" width="7.2" height="7.2" rx="1.5" fill="#2c3038"/><rect x="270.06" y="10.73" width="7.2" height="7.2" rx="1.5" fill="#2c3038"/><rect x="270.06" y="20.36" width="7.2" height="7.2" rx="1.5" fill="#2c3038"/><rect x="270.06" y="29.99" width="7.2" height="7.2" rx="1.5" fill="#2c3038"/><rect x="270.06" y="39.62" width="7.2" height="7.2" rx="1.5" fill="#2c3038"/><rect x="270.06" y="49.25" width="7.2" height="7.2" rx="1.5" fill="#2c3038"/><rect x="270.06" y="58.88" width="7.2" height="7.2" rx="1.5" fill="#2c3038"/><rect x="279.68" y="1.10" width="7.2" height="7.2" rx="1.5" fill="#2c3038"/><rect x="279.68" y="10.73" width="7.2" height="7.2" rx="1.5" fill="#2c3038"/><rect x="279.68" y="20.36" width="7.2" height="7.2" rx="1.5" fill="#2c3038"/><rect x="279.68" y="29.99" width="7.2" height="7.2" rx="1.5" fill="#2c3038"/><rect x="279.68" y="39.62" width="7.2" height="7.2" rx="1.5" fill="#2c3038"/><rect x="279.68" y="49.25" width="7.2" height="7.2" rx="1.5" fill="#2c3038"/><rect x="279.68" y="58.88" width="7.2" height="7.2" rx="1.5" fill="#2c3038"/><rect x="289.30" y="1.10" width="7.2" height="7.2" rx="1.5" fill="#2c3038"/><rect x="289.30" y="10.73" width="7.2" height="7.2" rx="1.5" fill="#2c3038"/><rect x="289.30" y="20.36" width="7.2" height="7.2" rx="1.5" fill="#2c3038"/><rect x="289.30" y="29.99" width="7.2" height="7.2" rx="1.5" fill="#2c3038"/><rect x="289.30" y="39.62" width="7.2" height="7.2" rx="1.5" fill="#2c3038"/><rect x="289.30" y="49.25" width="7.2" height="7.2" rx="1.5" fill="#2c3038"/><rect x="289.30" y="58.88" width="7.2" height="7.2" rx="1.5" fill="#2c3038"/><rect x="298.92" y="1.10" width="7.2" height="7.2" rx="1.5" fill="#2c3038"/><rect x="298.92" y="10.73" width="7.2" height="7.2" rx="1.5" fill="#2c3038"/><rect x="298.92" y="20.36" width="7.2" height="7.2" rx="1.5" fill="#2c3038"/><rect x="298.92" y="29.99" width="7.2" height="7.2" rx="1.5" fill="#2c3038"/><rect x="298.92" y="39.62" width="7.2" height="7.2" rx="1.5" fill="#2c3038"/><rect x="298.92" y="49.25" width="7.2" height="7.2" rx="1.5" fill="#2c3038"/><rect x="298.92" y="58.88" width="7.2" height="7.2" rx="1.5" fill="#2c3038"/><rect x="308.54" y="1.10" width="7.2" height="7.2" rx="1.5" fill="#2c3038"/><rect x="308.54" y="10.73" width="7.2" height="7.2" rx="1.5" fill="#2c3038"/><rect x="308.54" y="20.36" width="7.2" height="7.2" rx="1.5" fill="#2c3038"/><rect x="308.54" y="29.99" width="7.2" height="7.2" rx="1.5" fill="#2c3038"/><rect x="308.54" y="39.62" width="7.2" height="7.2" rx="1.5" fill="#2c3038"/><rect x="308.54" y="49.25" width="7.2" height="7.2" rx="1.5" fill="#2c3038"/><rect x="308.54" y="58.88" width="7.2" height="7.2" rx="1.5" fill="#2c3038"/><rect x="318.16" y="1.10" width="7.2" height="7.2" rx="1.5" fill="#2c3038"/><rect x="318.16" y="10.73" width="7.2" height="7.2" rx="1.5" fill="#2c3038"/><rect x="318.16" y="20.36" width="7.2" height="7.2" rx="1.5" fill="#2c3038"/><rect x="318.16" y="29.99" width="7.2" height="7.2" rx="1.5" fill="#2c3038"/><rect x="318.16" y="39.62" width="7.2" height="7.2" rx="1.5" fill="#2c3038"/><rect x="318.16" y="49.25" width="7.2" height="7.2" rx="1.5" fill="#2c3038"/><rect x="318.16" y="58.88" width="7.2" height="7.2" rx="1.5" fill="#2c3038"/><rect x="327.78" y="1.10" width="7.2" height="7.2" rx="1.5" fill="#2c3038"/><rect x="327.78" y="10.73" width="7.2" height="7.2" rx="1.5" fill="#2c3038"/><rect x="327.78" y="20.36" width="7.2" height="7.2" rx="1.5" fill="#2c3038"/><rect x="327.78" y="29.99" width="7.2" height="7.2" rx="1.5" fill="#2c3038"/><rect x="327.78" y="39.62" width="7.2" height="7.2" rx="1.5" fill="#2c3038"/><rect x="327.78" y="49.25" width="7.2" height="7.2" rx="1.5" fill="#2c3038"/><rect x="327.78" y="58.88" width="7.2" height="7.2" rx="1.5" fill="#2c3038"/><rect x="337.40" y="1.10" width="7.2" height="7.2" rx="1.5" fill="#2c3038"/><rect x="337.40" y="10.73" width="7.2" height="7.2" rx="1.5" fill="#2c3038"/><rect x="337.40" y="20.36" width="7.2" height="7.2" rx="1.5" fill="#2c3038"/><rect x="337.40" y="29.99" width="7.2" height="7.2" rx="1.5" fill="#2c3038"/><rect x="337.40" y="39.62" width="7.2" height="7.2" rx="1.5" fill="#2c3038"/><rect x="337.40" y="49.25" width="7.2" height="7.2" rx="1.5" fill="#2c3038"/><rect x="337.40" y="58.88" width="7.2" height="7.2" rx="1.5" fill="#2c3038"/><rect x="347.02" y="1.10" width="7.2" height="7.2" rx="1.5" fill="#2c3038"/><rect x="347.02" y="10.73" width="7.2" height="7.2" rx="1.5" fill="#2c3038"/><rect x="347.02" y="20.36" width="7.2" height="7.2" rx="1.5" fill="#2c3038"/><rect x="347.02" y="29.99" width="7.2" height="7.2" rx="1.5" fill="#2c3038"/><rect x="347.02" y="39.62" width="7.2" height="7.2" rx="1.5" fill="#2c3038"/><rect x="347.02" y="49.25" width="7.2" height="7.2" rx="1.5" fill="#2c3038"/><rect x="347.02" y="58.88" width="7.2" height="7.2" rx="1.5" fill="#2c3038"/><rect x="356.64" y="1.10" width="7.2" height="7.2" rx="1.5" fill="#2c3038"/><rect x="356.64" y="10.73" width="7.2" height="7.2" rx="1.5" fill="#2c3038"/><rect x="356.64" y="20.36" width="7.2" height="7.2" rx="1.5" fill="#2c3038"/><rect x="356.64" y="29.99" width="7.2" height="7.2" rx="1.5" fill="#2c3038"/><rect x="356.64" y="39.62" width="7.2" height="7.2" rx="1.5" fill="#2c3038"/><rect x="356.64" y="49.25" width="7.2" height="7.2" rx="1.5" fill="#2c3038"/><rect x="356.64" y="58.88" width="7.2" height="7.2" rx="1.5" fill="#2c3038"/><rect x="366.26" y="1.10" width="7.2" height="7.2" rx="1.5" fill="#2c3038"/><rect x="366.26" y="10.73" width="7.2" height="7.2" rx="1.5" fill="#2c3038"/><rect x="366.26" y="20.36" width="7.2" height="7.2" rx="1.5" fill="#2c3038"/><rect x="366.26" y="29.99" width="7.2" height="7.2" rx="1.5" fill="#2c3038"/><rect x="366.26" y="39.62" width="7.2" height="7.2" rx="1.5" fill="#2c3038"/><rect x="366.26" y="49.25" width="7.2" height="7.2" rx="1.5" fill="#2c3038"/><rect x="366.26" y="58.88" width="7.2" height="7.2" rx="1.5" fill="#2c3038"/><rect x="375.88" y="1.10" width="7.2" height="7.2" rx="1.5" fill="#2c3038"/><rect x="375.88" y="10.73" width="7.2" height="7.2" rx="1.5" fill="#2c3038"/><rect x="375.88" y="20.36" width="7.2" height="7.2" rx="1.5" fill="#2c3038"/><rect x="375.88" y="29.99" width="7.2" height="7.2" rx="1.5" fill="#2c3038"/><rect x="375.88" y="39.62" width="7.2" height="7.2" rx="1.5" fill="#2c3038"/><rect x="375.88" y="49.25" width="7.2" height="7.2" rx="1.5" fill="#2c3038"/><rect x="375.88" y="58.88" width="7.2" height="7.2" rx="1.5" fill="#2c3038"/><rect x="385.50" y="1.10" width="7.2" height="7.2" rx="1.5" fill="#2c3038"/><rect x="385.50" y="10.73" width="7.2" height="7.2" rx="1.5" fill="#2c3038"/><rect x="385.50" y="20.36" width="7.2" height="7.2" rx="1.5" fill="#2c3038"/><rect x="385.50" y="29.99" width="7.2" height="7.2" rx="1.5" fill="#2c3038"/><rect x="385.50" y="39.62" width="7.2" height="7.2" rx="1.5" fill="#2c3038"/><rect x="385.50" y="49.25" width="7.2" height="7.2" rx="1.5" fill="#2c3038"/><rect x="385.50" y="58.88" width="7.2" height="7.2" rx="1.5" fill="#2c3038"/><rect x="395.12" y="1.10" width="7.2" height="7.2" rx="1.5" fill="#2c3038"/><rect x="395.12" y="10.73" width="7.2" height="7.2" rx="1.5" fill="#2c3038"/><rect x="395.12" y="20.36" width="7.2" height="7.2" rx="1.5" fill="#2c3038"/><rect x="395.12" y="29.99" width="7.2" height="7.2" rx="1.5" fill="#2c3038"/><rect x="395.12" y="39.62" width="7.2" height="7.2" rx="1.5" fill="#2c3038"/><rect x="395.12" y="49.25" width="7.2" height="7.2" rx="1.5" fill="#2c3038"/><rect x="395.12" y="58.88" width="7.2" height="7.2" rx="1.5" fill="#2c3038"/><rect x="404.74" y="1.10" width="7.2" height="7.2" rx="1.5" fill="#2c3038"/><rect x="404.74" y="10.73" width="7.2" height="7.2" rx="1.5" fill="#2c3038"/><rect x="404.74" y="20.36" width="7.2" height="7.2" rx="1.5" fill="#2c3038"/><rect x="404.74" y="29.99" width="7.2" height="7.2" rx="1.5" fill="#2c3038"/><rect x="404.74" y="39.62" width="7.2" height="7.2" rx="1.5" fill="#2c3038"/><rect x="404.74" y="49.25" width="7.2" height="7.2" rx="1.5" fill="#2c3038"/><rect x="404.74" y="58.88" width="7.2" height="7.2" rx="1.5" fill="#2c3038"/><rect x="414.36" y="1.10" width="7.2" height="7.2" rx="1.5" fill="#2c3038"/><rect x="414.36" y="10.73" width="7.2" height="7.2" rx="1.5" fill="#2c3038"/><rect x="414.36" y="20.36" width="7.2" height="7.2" rx="1.5" fill="#2c3038"/><rect x="414.36" y="29.99" width="7.2" height="7.2" rx="1.5" fill="#2c3038"/><rect x="414.36" y="39.62" width="7.2" height="7.2" rx="1.5" fill="#2c3038"/><rect x="414.36" y="49.25" width="7.2" height="7.2" rx="1.5" fill="#2c3038"/><rect x="414.36" y="58.88" width="7.2" height="7.2" rx="1.5" fill="#2c3038"/><rect x="423.98" y="1.10" width="7.2" height="7.2" rx="1.5" fill="#2c3038"/><rect x="423.98" y="10.73" width="7.2" height="7.2" rx="1.5" fill="#2c3038"/><rect x="423.98" y="20.36" width="7.2" height="7.2" rx="1.5" fill="#2c3038"/><rect x="423.98" y="29.99" width="7.2" height="7.2" rx="1.5" fill="#2c3038"/><rect x="423.98" y="39.62" width="7.2" height="7.2" rx="1.5" fill="#2c3038"/><rect x="423.98" y="49.25" width="7.2" height="7.2" rx="1.5" fill="#2c3038"/><rect x="423.98" y="58.88" width="7.2" height="7.2" rx="1.5" fill="#2c3038"/><rect x="433.60" y="1.10" width="7.2" height="7.2" rx="1.5" fill="#2c3038"/><rect x="433.60" y="10.73" width="7.2" height="7.2" rx="1.5" fill="#2c3038"/><rect x="433.60" y="20.36" width="7.2" height="7.2" rx="1.5" fill="#2c3038"/><rect x="433.60" y="29.99" width="7.2" height="7.2" rx="1.5" fill="#2c3038"/><rect x="433.60" y="39.62" width="7.2" height="7.2" rx="1.5" fill="#2c3038"/><rect x="433.60" y="49.25" width="7.2" height="7.2" rx="1.5" fill="#2c3038"/><rect x="433.60" y="58.88" width="7.2" height="7.2" rx="1.5" fill="#2c3038"/><rect x="443.22" y="1.10" width="7.2" height="7.2" rx="1.5" fill="#2c3038"/><rect x="443.22" y="10.73" width="7.2" height="7.2" rx="1.5" fill="#2c3038"/><rect x="443.22" y="20.36" width="7.2" height="7.2" rx="1.5" fill="#2c3038"/><rect x="443.22" y="29.99" width="7.2" height="7.2" rx="1.5" fill="#1a5534"/><rect x="443.22" y="39.62" width="7.2" height="7.2" rx="1.5" fill="#2c3038"/><rect x="443.22" y="49.25" width="7.2" height="7.2" rx="1.5" fill="#2c3038"/><rect x="443.22" y="58.88" width="7.2" height="7.2" rx="1.5" fill="#2c3038"/><rect x="452.84" y="1.10" width="7.2" height="7.2" rx="1.5" fill="#2c3038"/><rect x="452.84" y="10.73" width="7.2" height="7.2" rx="1.5" fill="#2c3038"/><rect x="452.84" y="20.36" width="7.2" height="7.2" rx="1.5" fill="#2c3038"/><rect x="452.84" y="29.99" width="7.2" height="7.2" rx="1.5" fill="#2c3038"/><rect x="452.84" y="39.62" width="7.2" height="7.2" rx="1.5" fill="#2c3038"/><rect x="452.84" y="49.25" width="7.2" height="7.2" rx="1.5" fill="#2c3038"/><rect x="452.84" y="58.88" width="7.2" height="7.2" rx="1.5" fill="#2c3038"/><rect x="462.46" y="1.10" width="7.2" height="7.2" rx="1.5" fill="#2c3038"/><rect x="462.46" y="10.73" width="7.2" height="7.2" rx="1.5" fill="#2c3038"/><rect x="462.46" y="20.36" width="7.2" height="7.2" rx="1.5" fill="#2c3038"/><rect x="462.46" y="29.99" width="7.2" height="7.2" rx="1.5" fill="#2c3038"/><rect x="462.46" y="39.62" width="7.2" height="7.2" rx="1.5" fill="#2c3038"/><rect x="462.46" y="49.25" width="7.2" height="7.2" rx="1.5" fill="#2c3038"/><rect x="462.46" y="58.88" width="7.2" height="7.2" rx="1.5" fill="#2c3038"/><rect x="472.08" y="1.10" width="7.2" height="7.2" rx="1.5" fill="#2c3038"/><rect x="472.08" y="10.73" width="7.2" height="7.2" rx="1.5" fill="#2c3038"/><rect x="472.08" y="20.36" width="7.2" height="7.2" rx="1.5" fill="#2c3038"/><rect x="472.08" y="29.99" width="7.2" height="7.2" rx="1.5" fill="#2c3038"/><rect x="472.08" y="39.62" width="7.2" height="7.2" rx="1.5" fill="#2c3038"/><rect x="472.08" y="49.25" width="7.2" height="7.2" rx="1.5" fill="#11843b"/><rect x="472.08" y="58.88" width="7.2" height="7.2" rx="1.5" fill="#44da5d"/><rect x="481.70" y="1.10" width="7.2" height="7.2" rx="1.5" fill="#11843b"/><rect x="481.70" y="10.73" width="7.2" height="7.2" rx="1.5" fill="#1a5534"/><rect x="481.70" y="20.36" width="7.2" height="7.2" rx="1.5" fill="#2c3038"/><rect x="481.70" y="29.99" width="7.2" height="7.2" rx="1.5" fill="#1a5534"/><rect x="481.70" y="39.62" width="7.2" height="7.2" rx="1.5" fill="#1a5534"/><rect x="481.70" y="49.25" width="7.2" height="7.2" rx="1.5" fill="#1a5534"/><rect x="481.70" y="58.88" width="7.2" height="7.2" rx="1.5" fill="#1a5534"/><rect x="491.32" y="1.10" width="7.2" height="7.2" rx="1.5" fill="#11843b"/><rect x="491.32" y="10.73" width="7.2" height="7.2" rx="1.5" fill="#2c3038"/><rect x="491.32" y="20.36" width="7.2" height="7.2" rx="1.5" fill="#2c3038"/><rect x="491.32" y="29.99" width="7.2" height="7.2" rx="1.5" fill="#2c3038"/><rect x="491.32" y="39.62" width="7.2" height="7.2" rx="1.5" fill="#11843b"/><rect x="491.32" y="49.25" width="7.2" height="7.2" rx="1.5" fill="#1a5534"/><rect x="491.32" y="58.88" width="7.2" height="7.2" rx="1.5" fill="#11843b"/><rect x="500.94" y="1.10" width="7.2" height="7.2" rx="1.5" fill="#1a5534"/><rect x="500.94" y="10.73" width="7.2" height="7.2" rx="1.5" fill="#2c3038"/><rect x="500.94" y="20.36" width="7.2" height="7.2" rx="1.5" fill="#2c3038"/><rect x="500.94" y="29.99" width="7.2" height="7.2" rx="1.5" fill="#2c3038"/><rect x="500.94" y="39.62" width="7.2" height="7.2" rx="1.5" fill="#11843b"/><rect x="500.94" y="49.25" width="7.2" height="7.2" rx="1.5" fill="#1a5534"/></svg>
<div class="t" style="left:320.50px;top:464px;font-size:8.10px;color:#f0f6fc;letter-spacing:-0.159px;">Learn how we count contributions</div>
<div class="t" style="left:766.50px;top:465px;font-size:6.60px;color:#f0f6fc;">Less</div>
<div class="r" style="left:783px;top:463px;width:7px;height:7px;background:#2c3038;border-radius:1.5px;"></div>
<div class="r" style="left:791px;top:463px;width:7px;height:7px;background:#1a5534;border-radius:1.5px;"></div>
<div class="r" style="left:800px;top:463px;width:7px;height:7px;background:#11843b;border-radius:1.5px;"></div>
<div class="r" style="left:808px;top:463px;width:7px;height:7px;background:#2ea043;border-radius:1.5px;"></div>
<div class="r" style="left:817px;top:463px;width:7px;height:7px;background:#44da5d;border-radius:1.5px;"></div>
<div class="t" style="left:825.00px;top:464px;font-size:7.94px;color:#f0f6fc;">More</div>
</body></html>
